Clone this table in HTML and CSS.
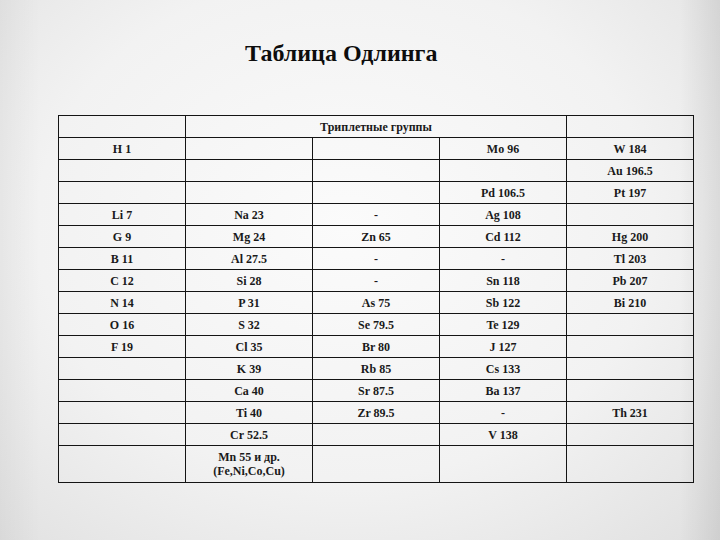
FILE: index.html
```html
<!DOCTYPE html>
<html lang="ru">
<head>
<meta charset="utf-8">
<title>Таблица Одлинга</title>
<link rel="stylesheet" href="styles.css">
</head>
<body>
<div class="slide">
  <h1 class="title">Таблица Одлинга</h1>
  <table class="odling">
    <colgroup><col><col><col><col><col></colgroup>
    <tr><td></td><td colspan="3">Триплетные группы</td><td></td></tr>
    <tr><td>H 1</td><td></td><td></td><td>Mo 96</td><td>W 184</td></tr>
    <tr><td></td><td></td><td></td><td></td><td>Au 196.5</td></tr>
    <tr><td></td><td></td><td></td><td>Pd 106.5</td><td>Pt 197</td></tr>
    <tr><td>Li 7</td><td>Na 23</td><td>-</td><td>Ag 108</td><td></td></tr>
    <tr><td>G 9</td><td>Mg 24</td><td>Zn 65</td><td>Cd 112</td><td>Hg 200</td></tr>
    <tr><td>B 11</td><td>Al 27.5</td><td>-</td><td>-</td><td>Tl 203</td></tr>
    <tr><td>C 12</td><td>Si 28</td><td>-</td><td>Sn 118</td><td>Pb 207</td></tr>
    <tr><td>N 14</td><td>P 31</td><td>As 75</td><td>Sb 122</td><td>Bi 210</td></tr>
    <tr><td>O 16</td><td>S 32</td><td>Se 79.5</td><td>Te 129</td><td></td></tr>
    <tr><td>F 19</td><td>Cl 35</td><td>Br 80</td><td>J 127</td><td></td></tr>
    <tr><td></td><td>K 39</td><td>Rb 85</td><td>Cs 133</td><td></td></tr>
    <tr><td></td><td>Ca 40</td><td>Sr 87.5</td><td>Ba 137</td><td></td></tr>
    <tr><td></td><td>Ti 40</td><td>Zr 89.5</td><td>-</td><td>Th 231</td></tr>
    <tr><td></td><td>Cr 52.5</td><td></td><td>V 138</td><td></td></tr>
    <tr class="tall"><td></td><td>Mn 55 и др.<br>(Fe,Ni,Co,Cu)</td><td></td><td></td><td></td></tr>
  </table>
</div>
</body>
</html>
```

FILE: styles.css
```css
html, body {
  margin: 0;
  padding: 0;
}

body {
  width: 720px;
  height: 540px;
  overflow: hidden;
  font-family: "Liberation Serif", "Times New Roman", Times, serif;
  color: #111;
}

.slide {
  width: 720px;
  height: 540px;
  box-sizing: border-box;
  padding-top: 39px;
  background:
    linear-gradient(to right, rgba(0,0,0,0.04) 0, rgba(0,0,0,0) 40px, rgba(0,0,0,0) 680px, rgba(0,0,0,0.08) 720px),
    radial-gradient(ellipse 78% 85% at 48% 42%, #fbfbfb 0%, #f2f2f2 55%, #dedede 100%);
}

.title {
  margin: 0;
  padding-left: 245px;
  font-family: inherit;
  font-size: 24px;
  line-height: 28px;
  font-weight: bold;
  color: #0d0d0d;
}

.odling {
  margin: 48px 0 0 58px;
  width: 636px;
  border-collapse: collapse;
  table-layout: fixed;
  font-family: inherit;
  font-size: 12px;
  font-weight: bold;
  color: #1a1a1a;
}

.odling col {
  width: 127px;
}

.odling td {
  border: 1px solid #141414;
  height: 21px;
  padding: 0;
  text-align: center;
  vertical-align: middle;
  line-height: 14px;
}

.odling .tall td {
  height: 36px;
}
```
